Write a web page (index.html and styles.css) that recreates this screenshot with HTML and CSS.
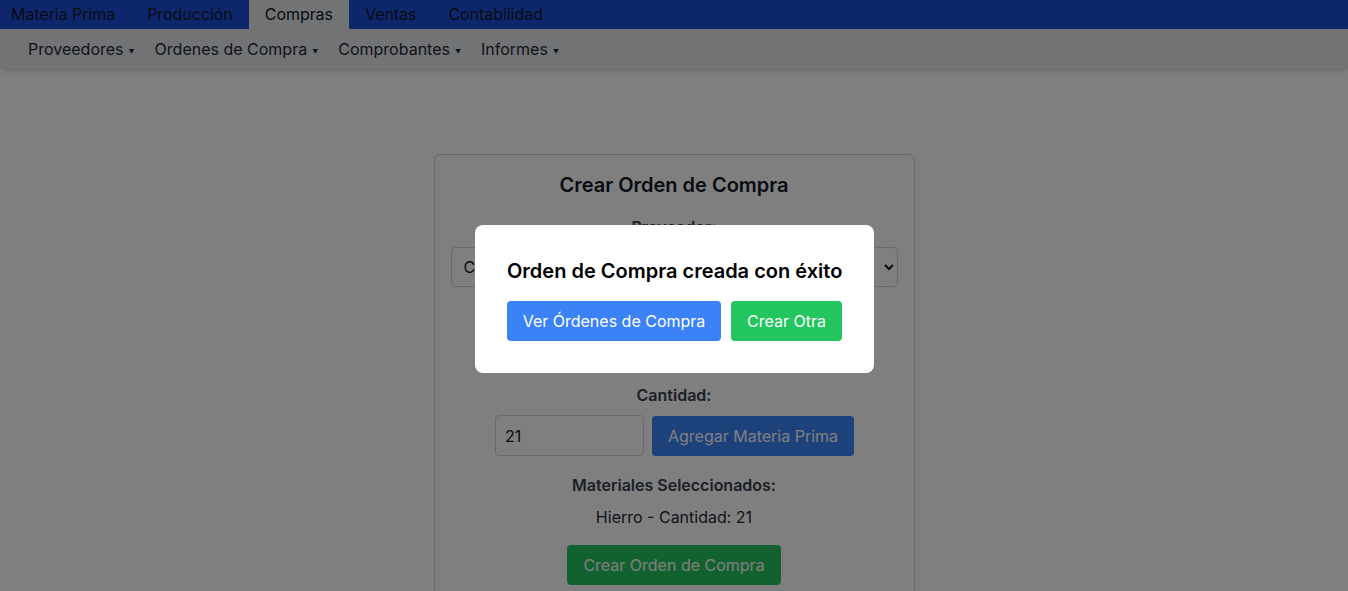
FILE: index.html
```html
<!DOCTYPE html>
<html lang="es">
<head>
<meta charset="utf-8">
<title>Crear Orden de Compra</title>
<link rel="stylesheet" href="styles.css">
</head>
<body>
<nav class="topnav">
  <ul class="topnav-list">
    <li><a class="topnav-link" href="#">Materia Prima</a></li>
    <li><a class="topnav-link" href="#">Producción</a></li>
    <li><a class="topnav-link is-active" href="#">Compras</a></li>
    <li><a class="topnav-link" href="#">Ventas</a></li>
    <li><a class="topnav-link" href="#">Contabilidad</a></li>
  </ul>
</nav>
<div class="subnav">
  <button class="subnav-item">Proveedores<span class="caret">▼</span></button>
  <button class="subnav-item">Ordenes de Compra<span class="caret">▼</span></button>
  <button class="subnav-item">Comprobantes<span class="caret">▼</span></button>
  <button class="subnav-item">Informes<span class="caret">▼</span></button>
</div>
<main class="content">
  <section class="card">
    <h2 class="card-title">Crear Orden de Compra</h2>
    <label class="field-label">Proveedor:</label>
    <select class="select select-full"><option>Comercial Hierros del Sur S.A.</option></select>
    <label class="field-label label-mp">Materia Prima:</label>
    <select class="select select-mp"><option>Hierro</option></select>
    <label class="field-label">Cantidad:</label>
    <div class="qty-row">
      <input class="qty-input" type="number" value="21">
      <button class="btn btn-blue btn-add">Agregar Materia Prima</button>
    </div>
    <h3 class="field-label sel-title">Materiales Seleccionados:</h3>
    <ul class="sel-list"><li>Hierro - Cantidad: 21</li></ul>
    <button class="btn btn-green">Crear Orden de Compra</button>
  </section>
</main>
<div class="overlay">
  <div class="modal">
    <h3 class="modal-title">Orden de Compra creada con éxito</h3>
    <div class="modal-actions">
      <button class="btn btn-blue btn-view">Ver Órdenes de Compra</button>
      <button class="btn btn-green btn-other">Crear Otra</button>
    </div>
  </div>
</div>
</body>
</html>
```

FILE: styles.css
```css
* { box-sizing: border-box; }
html, body { margin: 0; padding: 0; }
body {
  font-family: Inter, "Noto Sans", sans-serif;
  background: #ffffff;
  color: #111827;
  height: 591px;
  overflow: hidden;
}
.topnav {
  background: #1d4ed8;
  height: 29px;
}
.topnav-list {
  list-style: none;
  margin: 0 0 0 -5px;
  padding: 0;
  display: flex;
}
.topnav-link {
  display: block;
  padding: 0 16px;
  height: 29px;
  line-height: 29px;
  font-size: 16px;
  color: #111827;
  text-decoration: none;
  letter-spacing: -0.05px;
}
.topnav-link.is-active { background: #e5e7eb; }
.subnav {
  background: #e5e7eb;
  height: 40px;
  display: flex;
  align-items: center;
  gap: 20px;
  padding-left: 28px;
  box-shadow: 0 4px 6px -1px rgba(0,0,0,0.1), 0 2px 4px -2px rgba(0,0,0,0.1);
  position: relative;
}
.subnav-item {
  background: none;
  border: 0;
  padding: 0;
  font-family: inherit;
  font-size: 16px;
  color: #1f2937;
  display: flex;
  align-items: center;
}
.caret { font-size: 6px; margin-left: 5px; margin-top: 5px; }
.content {
  display: flex;
  justify-content: center;
  padding-top: 85px;
}
.card {
  width: 481px;
  border: 1px solid #d1d5db;
  border-radius: 6px;
  padding: 16px;
  display: flex;
  flex-direction: column;
  align-items: center;
  background: #fff;
}
.card-title {
  margin: 0 0 16px;
  font-size: 20px;
  line-height: 28px;
  font-weight: 600;
}
.field-label {
  margin: 0 0 8px;
  font-size: 16px;
  line-height: 24px;
  font-weight: 600;
  color: #374151;
}
.select {
  height: 40px;
  border: 1px solid #d1d5db;
  border-radius: 4px;
  padding: 0 8px;
  font-family: inherit;
  font-size: 16px;
  color: #111827;
  background: #fff;
}
.select-full { width: 100%; margin-bottom: 16px; }
.label-mp { margin-bottom: 6px; }
.select-mp { width: 297px; margin-bottom: 10px; }
.qty-row {
  display: flex;
  align-items: center;
  gap: 8px;
  margin-bottom: 17px;
  padding-left: 1px;
}
.qty-input {
  width: 149px;
  height: 41px;
  border: 1px solid #d1d5db;
  border-radius: 4px;
  padding: 0 9px;
  font-family: inherit;
  font-size: 16px;
  color: #111827;
}
.btn {
  border: 0;
  border-radius: 4px;
  padding: 8px 16px;
  font-family: inherit;
  font-size: 16px;
  line-height: 24px;
  color: #fff;
  cursor: pointer;
  white-space: nowrap;
}
.btn-add { width: 202px; padding: 8px 0; }
.btn-view { width: 214px; padding: 8px 0; }
.btn-other { width: 111px; padding: 8px 0; }
.btn-blue { background: #3b82f6; }
.btn-green { background: #22c55e; }
.sel-title { margin-bottom: 8px; }
.sel-list {
  list-style: none;
  margin: 0 0 16px;
  padding: 0;
  font-size: 16px;
  line-height: 24px;
  color: #1f2937;
}
.overlay {
  position: fixed;
  inset: 0;
  background: rgba(0,0,0,0.5);
  display: flex;
  align-items: center;
  justify-content: center;
  padding-top: 7px;
  padding-left: 1px;
}
.modal {
  background: #fff;
  border-radius: 8px;
  padding: 32px;
  width: 399px;
  text-align: center;
}
.modal-title {
  margin: 0 0 16px;
  font-size: 20px;
  line-height: 28px;
  font-weight: 600;
  color: #000;
  white-space: nowrap;
}
.modal-actions {
  display: flex;
  justify-content: flex-start;
  gap: 10px;
}
```
